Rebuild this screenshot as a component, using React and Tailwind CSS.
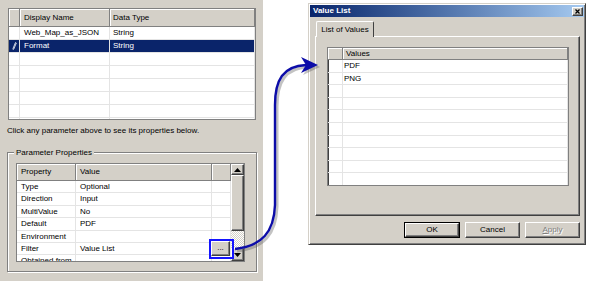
import React from 'react';

// win2k style bevels
const raised =
  'bg-[#d4d0c8] border border-t-white border-l-white border-r-[#404040] border-b-[#404040] shadow-[inset_-1px_-1px_0_#808080]';
const headCell = 'bg-[#d4d0c8] border-r border-b border-[#808080] shadow-[inset_1px_1px_0_#fff]';
const line = 'border-r border-b border-[#e4e4e4]';

const Pencil = () => (
  <svg width="5" height="8" viewBox="0 0 5 8">
    <path d="M3.5 0.5 L1 6.5 L1 7.5 L1.8 7 L4.3 1 Z" fill="none" stroke="#fff" strokeWidth="0.8" />
  </svg>
);

const Arrow = ({ down }) => (
  <svg width="7" height="4" viewBox="0 0 7 4">
    <path d={down ? 'M0 0 L7 0 L3.5 4 Z' : 'M0 4 L7 4 L3.5 0 Z'} fill="#000" />
  </svg>
);

function ParamGrid() {
  const rows = [
    ['Web_Map_as_JSON', 'String'],
    ['Format', 'String', true],
    [], [], [], [], [], [],
  ];
  return (
    <div className="w-[248px] h-[112px] ml-[1px] border border-[#808080] bg-white overflow-hidden">
      <div className="flex h-[18px]">
        <div className={`w-[11px] ${headCell}`} />
        <div className={`w-[90px] pl-[4px] flex items-center ${headCell}`}>Display Name</div>
        <div className={`flex-1 pl-[3px] flex items-center ${headCell}`}>Data Type</div>
      </div>
      {rows.map(([name, type, sel], i) => (
        <div
          key={i}
          className={`flex h-[13px] leading-[12px] ${sel ? 'bg-[#0a246a] text-white' : ''}`}
        >
          <div className={`w-[11px] flex items-center justify-center ${line}`}>{sel && <Pencil />}</div>
          <div className={`w-[90px] pl-[4px] ${line}`}>{name}</div>
          <div className={`flex-1 pl-[3px] ${line}`}>{type}</div>
        </div>
      ))}
    </div>
  );
}

function PropGrid() {
  const rows = [
    ['Type', 'Optional'],
    ['Direction', 'Input'],
    ['MultiValue', 'No'],
    ['Default', 'PDF'],
    ['Environment', ''],
    ['Filter', 'Value List', true],
    ['Obtained from', ''],
  ];
  return (
    <div className="w-[229px] h-[99px] border border-[#808080] bg-white flex overflow-hidden">
      <div className="w-[214px] flex flex-col">
        <div className="flex h-[17px] shrink-0">
          <div className={`w-[59px] pl-[4px] flex items-center ${headCell}`}>Property</div>
          <div className={`w-[136px] pl-[4px] flex items-center ${headCell}`}>Value</div>
          <div className={`flex-1 ${headCell}`} />
        </div>
        {rows.map(([k, v, btn]) => (
          <div key={k} className="flex h-[12.4px] shrink-0 leading-[11.4px]">
            <div className={`w-[59px] pl-[4px] ${line}`}>{k}</div>
            <div className={`w-[136px] pl-[4px] ${line}`}>{v}</div>
            <div className={`flex-1 relative ${line}`}>
              {btn && (
                <>
                  <div className="absolute left-[-3px] top-[-4px] w-[25px] h-[20px] border-2 border-[#1414ff] z-10" />
                  <div
                    className={`absolute left-[-1px] top-[-2px] w-[19px] h-[15px] flex items-center justify-center leading-none ${raised}`}
                  >
                    ...
                  </div>
                </>
              )}
            </div>
          </div>
        ))}
      </div>
      <div className="w-[13px] ml-auto flex flex-col">
        <div className={`h-[11px] flex items-center justify-center ${raised}`}>
          <Arrow />
        </div>
        <div className={`h-[56px] ${raised}`} />
        <div className="flex-1 bg-[repeating-conic-gradient(#ffffff_0%_25%,#d4d0c8_0%_50%)] bg-[length:2px_2px]" />
        <div className={`h-[13px] flex items-center justify-center ${raised}`}>
          <Arrow down />
        </div>
      </div>
    </div>
  );
}

function LeftPanel() {
  return (
    <div className="w-[263px] h-[281px] shrink-0 bg-[#d4d0c8] pl-[7px] pt-[8px]">
      <ParamGrid />
      <div className="mt-[5px] h-[11px] leading-[11px]">Click any parameter above to see its properties below.</div>
      <div className="relative mt-[16px] w-[250px] h-[120px] border border-[#808080] shadow-[1px_1px_0_#fff,inset_1px_1px_0_#fff] pl-[8px] pt-[10px]">
        <div className="absolute left-[6px] top-[-6px] px-[2px] bg-[#d4d0c8] leading-[11px]">Parameter Properties</div>
        <PropGrid />
      </div>
    </div>
  );
}

function ValueDialog() {
  const rows = ['PDF', 'PNG', '', '', '', '', '', '', '', '', ''];
  return (
    <div className="w-[278px] h-[242px] bg-[#d4d0c8] border border-t-[#d4d0c8] border-l-[#d4d0c8] border-r-[#404040] border-b-[#404040] shadow-[inset_1px_1px_0_#fff,inset_-1px_-1px_0_#808080] p-[1px] flex flex-col">
      <div className="h-[12px] bg-linear-to-r from-[#0a246a] to-[#a6caf0] flex items-center pl-[3px] pr-[1px]">
        <span className="text-white font-bold leading-none">Value List</span>
        <div className={`ml-auto w-[11px] h-[9px] flex items-center justify-center ${raised}`}>
          <svg width="5" height="5" viewBox="0 0 5 5">
            <path d="M0.5 0.5 L4.5 4.5 M4.5 0.5 L0.5 4.5" stroke="#000" strokeWidth="1.3" />
          </svg>
        </div>
      </div>
      <div className="pl-[5px] pt-[4px]">
        <div className="ml-[1px] w-[58px] h-[16px] bg-[#d4d0c8] border-t border-l border-t-white border-l-white border-r border-r-[#404040] rounded-t-[2px] flex items-center justify-center leading-none relative z-10 -mb-[1px]">
          List of Values
        </div>
        <div className="w-[265px] h-[180px] border border-t-white border-l-white border-r-[#404040] border-b-[#404040] shadow-[inset_-1px_-1px_0_#808080] pl-[11px] pt-[10px]">
          <div className="w-[242px] h-[139px] border border-[#808080] shadow-[inset_1px_1px_0_#404040] bg-white overflow-hidden">
            <div className="flex h-[12px]">
              <div className={`w-[15px] ${headCell}`} />
              <div className={`flex-1 pl-[3px] flex items-center ${headCell}`}>Values</div>
            </div>
            {rows.map((v, i) => (
              <div key={i} className="flex h-[12.6px] leading-[12px]">
                <div className={`w-[15px] ${line}`} />
                <div className={`flex-1 pl-[1px] ${line}`}>{v}</div>
              </div>
            ))}
          </div>
        </div>
      </div>
      <div className="flex justify-end gap-[5px] pr-[4px] mt-[6px]">
        <div className="w-[56px] h-[16px] border border-black">
          <div className={`h-full flex items-center justify-center leading-none ${raised}`}>OK</div>
        </div>
        <div className={`w-[55px] h-[16px] flex items-center justify-center leading-none ${raised}`}>Cancel</div>
        <div className={`w-[55px] h-[16px] flex items-center justify-center leading-none text-[#808080] [text-shadow:1px_1px_0_#fff] ${raised}`}>
          <span>
            <span className="underline">A</span>pply
          </span>
        </div>
      </div>
    </div>
  );
}

export default function App() {
  return (
    <div className="relative w-[596px] h-[281px] flex bg-white text-black text-[8px] font-['Liberation_Sans',Arial,sans-serif] overflow-hidden">
      <LeftPanel />
      <div className="flex-1 pl-[45px] pt-[3px]">
        <ValueDialog />
      </div>
      {/* callout arrow */}
      <svg className="absolute inset-0 pointer-events-none z-20" width="596" height="281" viewBox="0 0 596 281">
        <g transform="translate(2 2)" opacity="0.35">
          <path d="M235 249 C262 246, 274 232, 275 205 L275 105 C275 80, 283 66, 306 65" fill="none" stroke="#555" strokeWidth="3" />
          <path d="M318 65 L301 57 L306 65 L301 73 Z" fill="#555" />
        </g>
        <path d="M235 249 C262 246, 274 232, 275 205 L275 105 C275 80, 283 66, 306 65" fill="none" stroke="#0c0ca8" strokeWidth="2.4" />
        <path d="M318 65 L301 57 L306 65 L301 73 Z" fill="#0c0ca8" />
      </svg>
    </div>
  );
}
